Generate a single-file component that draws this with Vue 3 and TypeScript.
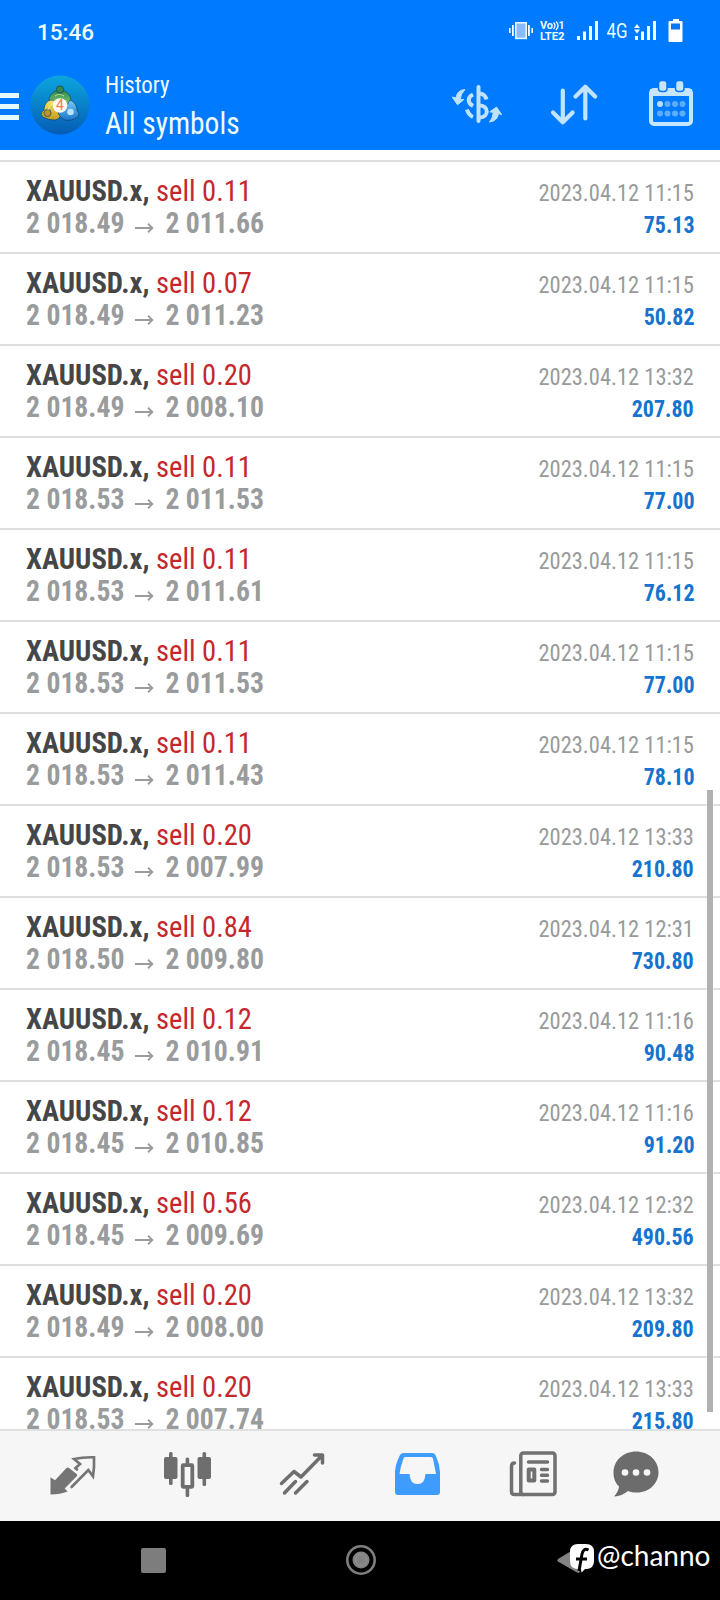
<script setup lang="ts">
interface Deal {
  volume: string
  open: string
  close: string
  time: string
  profit: string
}

const deal = (volume: string, open: string, close: string, time: string, profit: string): Deal => ({
  volume,
  open,
  close,
  time: `2023.04.12 ${time}`,
  profit,
})

const deals: Deal[] = [
  deal('0.11', '2 018.49', '2 011.66', '11:15', '75.13'),
  deal('0.07', '2 018.49', '2 011.23', '11:15', '50.82'),
  deal('0.20', '2 018.49', '2 008.10', '13:32', '207.80'),
  deal('0.11', '2 018.53', '2 011.53', '11:15', '77.00'),
  deal('0.11', '2 018.53', '2 011.61', '11:15', '76.12'),
  deal('0.11', '2 018.53', '2 011.53', '11:15', '77.00'),
  deal('0.11', '2 018.53', '2 011.43', '11:15', '78.10'),
  deal('0.20', '2 018.53', '2 007.99', '13:33', '210.80'),
  deal('0.84', '2 018.50', '2 009.80', '12:31', '730.80'),
  deal('0.12', '2 018.45', '2 010.91', '11:16', '90.48'),
  deal('0.12', '2 018.45', '2 010.85', '11:16', '91.20'),
  deal('0.56', '2 018.45', '2 009.69', '12:32', '490.56'),
  deal('0.20', '2 018.49', '2 008.00', '13:32', '209.80'),
  deal('0.20', '2 018.53', '2 007.74', '13:33', '215.80'),
]
</script>

<template>
  <div class="screen">
    <header class="header">
      <div class="status">
        <span class="clock">15:46</span>
        <svg class="status-icons" viewBox="508 12 176 34" width="176" height="34">
          <g fill="#fff">
            <rect x="509" y="27" width="1.6" height="5" /><rect x="512" y="24" width="1.8" height="11" />
            <rect x="528" y="24" width="1.8" height="11" /><rect x="531.4" y="27" width="1.6" height="5" />
            <rect x="515.8" y="21.8" width="10.4" height="15.6" fill="#8bb9fb" stroke="#e4f6ff" stroke-width="1.6" />
          </g>
          <g class="volte" fill="#f0fbff">
            <text x="540" y="28" textLength="13" lengthAdjust="spacingAndGlyphs">Vo</text>
            <text x="558.500" y="28">1</text>
            <text x="540" y="39" textLength="24.5" lengthAdjust="spacingAndGlyphs">LTE2</text>
          </g>
          <path d="M553.5 21.5q3 3 0 6.500M556 20.500q4 4 0 8.500" fill="none" stroke="#f0fbff" stroke-width="1.300" />
          <g fill="#f0fbff">
            <rect x="577" y="35" width="3" height="4" /><rect x="583" y="30.500" width="3" height="8.500" />
            <rect x="589" y="25" width="3" height="14" /><rect x="595" y="20" width="3" height="19" />
            <rect x="635" y="35" width="3" height="4" /><rect x="641" y="30.500" width="3" height="8.500" />
            <rect x="647" y="25" width="3" height="14" /><rect x="653" y="20" width="3" height="19" />
            <path d="M634 27l3-4 3 4zM634 28.600l3 4 3-4z" />
            <path d="M673 18h6v2h2.500q1 0 1 1v19q0 1-1 1h-12q-1 0-1-1v-19q0-1 1-1h3.500z" fill="#fff" />
            <rect x="671" y="22.500" width="9" height="6" fill="#0878f4" />
          </g>
          <text class="network" x="606.500" y="37" textLength="21" lengthAdjust="spacingAndGlyphs">4G</text>
        </svg>
      </div>

      <div class="appbar">
        <div class="burger"><i /><i /><i /></div>
        <svg class="logo" viewBox="0 0 60 60" width="60" height="60">
          <defs>
            <linearGradient id="disc" x1="0" y1="0" x2="0" y2="1">
              <stop offset="0" stop-color="#0ca6de" /><stop offset="1" stop-color="#065cb4" />
            </linearGradient>
            <linearGradient id="green" x1="0" y1="0" x2="0" y2="1">
              <stop offset="0" stop-color="#2b8a48" /><stop offset="1" stop-color="#8fd07a" />
            </linearGradient>
            <linearGradient id="gold" x1="0" y1="0" x2="0" y2="1">
              <stop offset="0" stop-color="#f4e66c" /><stop offset="1" stop-color="#c59b1c" />
            </linearGradient>
            <linearGradient id="sky" x1="0" y1="0" x2="0" y2="1">
              <stop offset="0" stop-color="#7cc8f4" /><stop offset="1" stop-color="#1976cc" />
            </linearGradient>
          </defs>
          <circle cx="30" cy="30" r="29.500" fill="url(#disc)" />
          <g stroke="#10456a" stroke-width=".7">
            <path d="M30 15c6 0 11 5 11 11 0 3-1 5-3 6H22c-2-1-3-3-3-6 0-6 5-11 11-11z" fill="url(#green)" />
            <path d="M22 25c6 1 10 6 10 12 0 4-3 7-7 8-4 0-8-1-12-3-2-2-2-5 1-7 0-5 3-10 8-10z" fill="url(#gold)" />
            <path d="M40 25c5 2 7 6 7 11 3 2 2 6-1 7-3 2-7 3-11 2-4-2-6-4-7-8 4-1 8-5 12-12z" fill="url(#sky)" />
            <circle cx="30" cy="14.500" r="3.700" fill="#36874c" />
            <circle cx="17.500" cy="38" r="3.600" fill="#ba9524" />
            <circle cx="40.500" cy="37" r="3.300" fill="#b9e2fa" stroke="none" />
          </g>
          <path d="M18 35q1-5 6-7M25 21q4-3 9 0" fill="none" stroke="#eaf7a4" stroke-width="1.100" opacity=".7" />
          <circle cx="30" cy="30.500" r="7.300" fill="#fdf9ef" />
          <text class="four" x="30" y="35" text-anchor="middle">4</text>
        </svg>
        <div class="titles">
          <div class="sub">History</div>
          <div class="main">All symbols</div>
        </div>
        <svg class="act" viewBox="450 79 54 50" width="54" height="50" fill="none" stroke="#bfe2ff">
          <path d="M478.500 87V121" stroke-width="4" stroke-linecap="round" />
          <path d="M480 93.500q5 .5 6.500 6M473 94.500c-6 3-5.500 8.500 0 11.500M480 105.500c9 .5 9 11.500 0 12M467 109.500q1.500 5.500 6 7.500" stroke-width="4" />
          <path d="M465 89.500q-8 .5-9 8.500l-3.800-1 5.300 7.800 6.300-5.200-3.600-.4q.3-5 4.800-9.700zM489.500 122q8-1 9-8.500l3.200 1.200-5.200-7.600-6.700 4.700 3.500.6q-.3 5.500-3.800 9.600z" fill="#bfe2ff" stroke-width="1" stroke-linejoin="round" />
        </svg>
        <svg class="act sort" viewBox="548 79 54 50" width="54" height="50" fill="none" stroke="#c2e4ff" stroke-width="4.200" stroke-linecap="round" stroke-linejoin="round">
          <path d="M562.800 90.500V121.500M553 112.500l9.800 9.800 9.800-9.800M585.300 118.500V87.500M575.500 96.500l9.800-9.800 9.800 9.800" />
        </svg>
        <svg class="act calendar" viewBox="646 79 50 50" width="50" height="50">
          <rect x="651" y="90" width="40" height="34" rx="3" fill="none" stroke="#c6e6ff" stroke-width="4" />
          <rect x="650" y="89" width="42" height="7" fill="#c6e6ff" />
          <g fill="#c6e6ff" stroke="#0878f4" stroke-width="1.500">
            <rect x="658.500" y="80.500" width="8.500" height="11" rx="3" /><rect x="675.500" y="80.500" width="8.500" height="11" rx="3" />
          </g>
          <g fill="#5cadff">
            <circle cx="660" cy="104" r="3" fill="#b5e0ff" /><circle cx="667.500" cy="104" r="3" /><circle cx="675" cy="104" r="3" /><circle cx="682.500" cy="104" r="3" />
            <circle cx="660" cy="113.500" r="3" /><circle cx="667.500" cy="113.500" r="3" /><circle cx="675" cy="113.500" r="3" /><circle cx="682.500" cy="113.500" r="3" />
          </g>
        </svg>
      </div>
    </header>

    <main class="list">
      <article v-for="(d, i) in deals" :key="i" class="row">
        <div class="line">
          <div class="symbol"><b>XAUUSD.x,</b> <span>sell {{ d.volume }}</span></div>
          <time>{{ d.time }}</time>
        </div>
        <div class="line">
          <div class="prices">
            <span>{{ d.open }}</span>
            <svg viewBox="0 0 20 12" width="20" height="12" fill="none" stroke="#999b9d" stroke-width="1.900"><path d="M0 6H18M13.800 1.700L18.300 6l-4.500 4.300" /></svg>
            <span>{{ d.close }}</span>
          </div>
          <b class="profit">{{ d.profit }}</b>
        </div>
      </article>
      <div class="scrollbar" />
    </main>

    <nav class="tabs">
      <svg viewBox="48 1448 50 52" width="50" height="52">
        <path d="M50.500 1477.300l4.500 3L66.500 1468q1.500-1 2.500 0l7.700 6q1 1 .3 2L64.700 1488.500l2.800 3q-7 3-17 3z" fill="#757575" />
        <path d="M77 1469.500l-1.500-1.500 4.500-4-6-5q9-2 20-1.700.5 10-1 19l-4.700-6.300L71.600 1487" fill="none" stroke="#757575" stroke-width="2.700" stroke-linecap="round" />
      </svg>
      <svg viewBox="163 1448 50 52" width="50" height="52" fill="#6e6e6e">
        <rect x="164" y="1457" width="13.500" height="22" rx="2" /><rect x="169" y="1452" width="3.600" height="33" rx="1.500" />
        <rect x="197.500" y="1457" width="13.500" height="22" rx="2" /><rect x="202.500" y="1452" width="3.600" height="34" rx="1.500" />
        <rect x="182.700" y="1465.200" width="9.600" height="21.600" rx=".5" fill="none" stroke="#6e6e6e" stroke-width="3.800" />
        <rect x="185.600" y="1457.500" width="3.600" height="7" rx="1.500" /><rect x="185.600" y="1487" width="3.600" height="10" rx="1.500" />
      </svg>
      <svg viewBox="278 1448 50 52" width="50" height="52" fill="none" stroke="#6e6e6e" stroke-width="3.500" stroke-linecap="round" stroke-linejoin="round">
        <path d="M281.500 1483.500l12.500-12 7 5.500 21-21.500M314.500 1455h8v8M284.500 1493l11-11.500M295.500 1493l11.500-11.500" />
      </svg>
      <svg viewBox="393 1448 50 52" width="50" height="52">
        <path d="M404 1453h28q2.500 0 3.500 2 4 8.500 4.500 17v20q0 3-3 3h-39q-3 0-3-3v-20q.5-8.500 5-17 1-2 4-2z" fill="#3f9cff" />
        <path d="M405 1457h26q1.500 0 2 1.500l3 15.500h-10.500q-.5 10-8 10t-8-10H399.500q1-8 4-15.500.5-1.500 1.500-1.500z" fill="#f6f6f6" />
      </svg>
      <svg viewBox="508 1448 50 52" width="50" height="52" fill="none" stroke="#707070" stroke-width="3.500" stroke-linecap="round">
        <rect x="520.800" y="1453" width="34.200" height="41.500" rx="2.500" />
        <path d="M514.500 1463q-3 0-3 3.500v25q0 3 3 3h9M528.500 1462h19" />
        <rect x="528.700" y="1469.500" width="5.600" height="11" stroke-width="4" stroke-linejoin="round" />
        <path d="M541.500 1469.500h6M541.500 1475.300h6M541.500 1481h6" />
      </svg>
      <svg class="chat" viewBox="612 1448 50 52" width="50" height="52">
        <path d="M636 1451.500c12.500 0 22.500 9 22.500 20.500s-9 20.500-21.500 20.500c-4 0-6-.5-9-1.500q-6 5-14 5.500 4.500-5 5-10c-4-4-5.500-8.500-5.500-14 0-12 10-21 22.500-21z" fill="#6c6c6c" />
        <g fill="#f6f6f6"><circle cx="625" cy="1472.500" r="3.300" /><circle cx="636" cy="1472.500" r="3.300" /><circle cx="647" cy="1472.500" r="3.300" /></g>
      </svg>
    </nav>

    <footer class="system">
      <div class="recent" />
      <svg class="home" viewBox="0 0 32 32" width="32" height="32">
        <circle cx="16" cy="16" r="13.700" fill="none" stroke="#7e7e7e" stroke-width="2.600" />
        <circle cx="16" cy="16" r="8.500" fill="#828282" /><circle cx="16" cy="16" r="5.500" fill="none" stroke="#929292" />
      </svg>
      <svg class="mark" viewBox="556 1540 40 36" width="40" height="36">
        <path d="M558 1559q-1.500 1.500 0 2.500l19 11q3 1.500 3-2v-21q0-3.500-3-2z" fill="#828282" />
        <path d="M578 1544h8q8 0 8 8v9q0 7-7 8h-2l-3.500 3.500-.5-3.500h-3q-8 0-8-8v-9q0-8 8-8z" fill="#fff" />
        <path d="M588.500 1550q-5-2.500-6.500 4l-3 17M576 1559h11" fill="none" stroke="#050505" stroke-width="3" />
      </svg>
      <span class="handle">@channo</span>
    </footer>
  </div>
</template>

<style>
body {
  margin: 0;
  background: #000;
}
</style>

<style scoped>
.screen {
  width: 720px;
  height: 1600px;
  display: flex;
  flex-direction: column;
  overflow: hidden;
  background: #fff;
  font-family: "Roboto Condensed", Roboto, "Liberation Sans", sans-serif;
  font-stretch: 75%;
}
svg { display: block; flex: none; }
.header { height: 150px; flex: none; background: #007aff; color: #effcff; }
.status { height: 60px; display: flex; align-items: center; padding: 0 36px 0 37px; justify-content: space-between; }
.clock { font: 500 22.5px/26px Roboto, sans-serif; font-stretch: 100%; padding-top: 4px; }
.volte { font: 700 10.5px Roboto, sans-serif; }
.network { font: 400 20px Roboto, sans-serif; fill: #effcff; }
.appbar { height: 90px; display: flex; }
.burger { width: 19px; padding-top: 33px; display: flex; flex-direction: column; gap: 6px; }
.burger i { height: 5px; background: #e4faff; }
.logo { margin: 15px 0 0 11px; }
.four { font: 400 14px Roboto, sans-serif; fill: #ef8148; }
.titles { width: 360px; padding: 11px 0 0 15px; box-sizing: border-box; white-space: nowrap; }
.sub, .main { width: max-content; transform-origin: left center; }
.sub { font-size: 24px; line-height: 28px; transform: scaleX(0.95); }
.main { font-size: 32px; line-height: 40px; margin-top: 4px; transform: scaleX(0.92); }
.act { margin-top: 19px; }
.sort { margin-left: 44px; }
.calendar { margin-left: 44px; }
.list { position: relative; height: 1279px; flex: none; overflow: hidden; padding-top: 10px; box-sizing: border-box; }
.row { height: 92px; box-sizing: border-box; border-top: 2px solid #dfdfdf; padding: 12px 26px 0; white-space: nowrap; }
.line { display: flex; justify-content: space-between; height: 32px; line-height: 34px; }
.symbol { font-size: 29px; color: #c4282c; transform: scaleX(0.985); transform-origin: left center; }
.symbol b { color: #444648; }
time { font-size: 24px; line-height: 38px; color: #9a9a9a; transform: scaleX(0.937); transform-origin: right center; }
.prices { display: flex; font-size: 29px; font-weight: 700; color: #999b9d; transform: scaleX(0.955); transform-origin: left center; }
.prices svg { margin: 16px 12px 0 11px; }
.profit { font-size: 24px; line-height: 38px; color: #1673ce; transform: scaleX(0.915); transform-origin: right center; }
.scrollbar { position: absolute; right: 7px; top: 640px; width: 6px; height: 622px; background: #b1b1b1; }
.tabs { height: 92px; flex: none; box-sizing: border-box; border-top: 2px solid #e0e0e1; background: #f6f6f6; display: flex; gap: 65px; padding: 17px 0 0 48px; }
.chat { margin-left: -11px; }
.system { height: 79px; display: flex; background: #000; }
.recent { width: 25px; height: 25px; margin: 27px 0 0 141px; border-radius: 2px; background: #7d7d7d; }
.home { margin: 23px 0 0 178.5px; }
.mark { margin: 19px 0 0 179.5px; }
.handle { font: 400 28px/32px Lato, sans-serif; color: #fff; margin: 18px 0 0 1px; }
</style>
